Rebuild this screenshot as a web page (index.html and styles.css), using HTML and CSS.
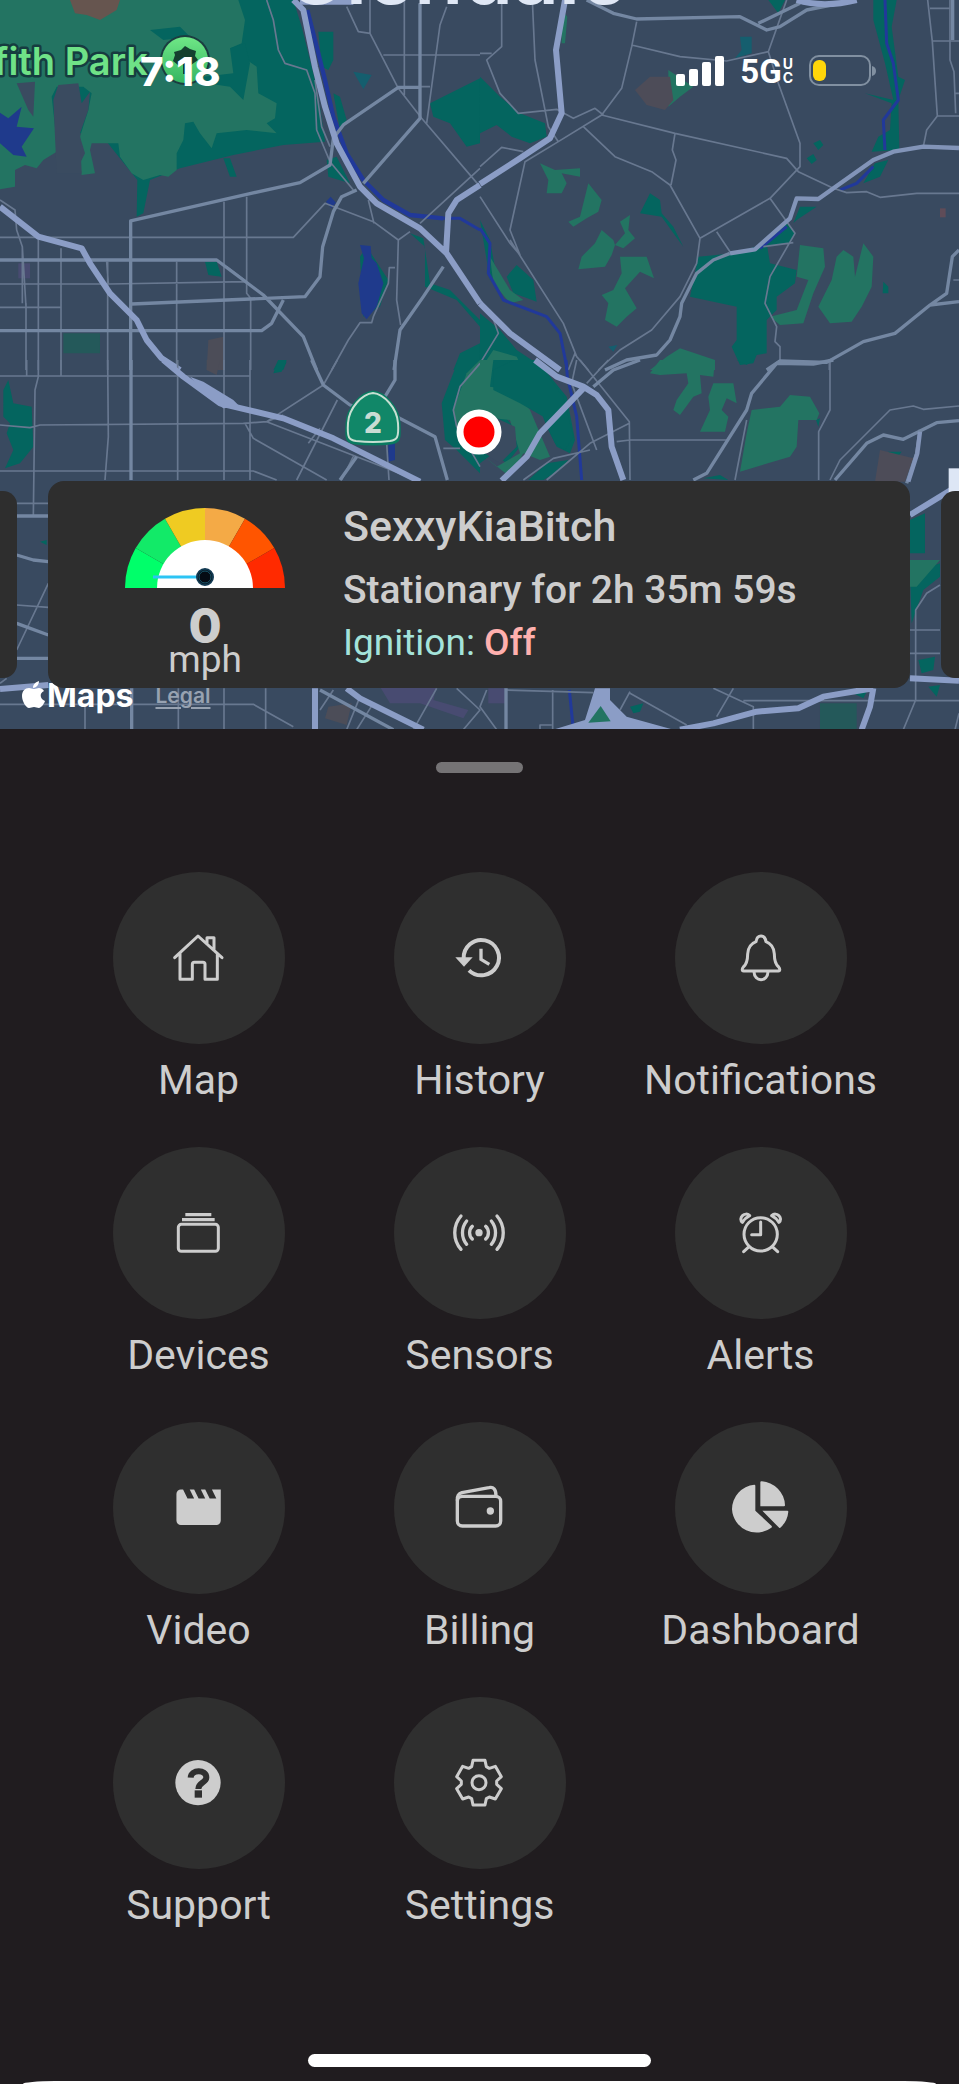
FILE: index.html
```html
<!DOCTYPE html>
<html lang="en">
<head>
<meta charset="utf-8">
<meta name="viewport" content="width=device-width, initial-scale=1">
<title>Vehicle tracker</title>
<link rel="stylesheet" href="styles.css">
</head>
<body>
<main class="app">
  <section class="map" aria-label="Map">
    <svg class="map-canvas" viewBox="0 0 959 729" preserveAspectRatio="xMidYMin slice" aria-hidden="true">
      <defs>
        <linearGradient id="pin" x1="0" y1="0" x2="0" y2="1"><stop offset="0" stop-color="#6fe786"/><stop offset="1" stop-color="#35b562"/></linearGradient>
      </defs>
      <rect width="959" height="729" fill="#394a60"/>

      <!-- north-west -->
      <g transform="scale(.33333)">
        <path class="park" d="M0 0H880L905 80L945 240L960 320L975 425L850 435L700 465L540 505L450 540L430 640L410 650L412 540L380 500L300 400L0 400Z"/>
        <path class="hill" d="M0 0H715L735 60L725 130L690 145L770 200L775 280L830 310L825 355L800 370L830 400L740 390L650 400L635 445L600 400L580 365L555 370L550 420L530 460L530 510L505 530L480 525L430 540L395 520L360 470L355 430H275L270 450L285 520L245 525L240 490L255 460L240 410L265 330L275 280L250 260H170L155 290L165 380L170 455L130 480L110 505L75 495L45 510V560L0 568Z"/>
        <path class="land" d="M50 250L105 245L100 350L85 330ZM175 255L235 250L245 310L270 275L265 330L240 400L245 520L170 520L160 300Z"/>
        <path class="park" d="M450 90L540 80L570 110L490 120ZM690 145L735 130L750 190L730 300L690 260L620 250L610 230L700 220ZM1290 310L1440 235V430L1400 440L1350 370L1300 350ZM955 95H1000V180L985 210L965 200ZM1000 280L1020 290L1040 360L1020 390ZM980 480L1010 470L1050 550L985 530ZM670 475H690L710 530H690ZM615 785H650L665 830L625 825ZM1230 700L1270 715L1290 850L1350 870L1440 960V980L1370 900L1275 860V740ZM1360 1110L1380 1060L1440 1030V1110ZM820 1110L835 1080L860 1085L850 1110ZM1080 770L1100 740L1165 840L1140 920L1090 950Z"/>
        <path fill="#66554f" d="M210 0H360L350 30L300 60L260 45L225 40Z"/>
        <path fill="#24595a" d="M190 1000H300V1060H190Z"/><path fill="#4c4d58" d="M625 1020L670 1010V1110H620Z"/><path fill="#484b71" d="M55 790H90V835H55Z"/>
        <path fill="#155e6e" d="M1060 215L1115 225L1090 268Z"/>
        <path class="lake" d="M0 338L25 355L65 320L50 380L102 385L65 440L80 470L40 465L0 430ZM1080 735L1112 738L1115 775L1130 790L1150 850L1130 920L1100 958L1085 940L1075 850L1092 775ZM978 605L992 590L1008 608L994 625Z"/>
        <path class="river wide" d="M922 30L945 120L975 240L1000 350L1040 460L1090 540L1150 600L1230 645L1330 655"/>
        <path class="river" d="M1330 655L1380 655L1440 690"/>
        <path class="minor" d="M0 712H880L975 610L1120 665L1195 720L1230 695M0 852H330L740 845L680 800M0 922H185M67 910V740L50 690L45 630L0 600M78 910V1110M115 715V1110M183 745V1110M323 785V1110M325 850L320 785M530 785V1110M672 605V1110M740 590V880L752 895V1110M67 740L78 920M1195 720L1190 900L1202 975M1185 803H1168L1165 850L1120 950L1115 968H1080L1045 1020L995 1110M800 0L820 60L835 150L855 190L920 210L945 280L950 390L990 485L1060 570M1105 600L1122 670M1260 670L1440 505M1150 165H1440M1110 0V100L1195 265L1265 355L1440 560M1040 20L1075 95L1110 100M1213 0V285M1340 20L1320 75L1280 370M1255 260H1290M945 240L965 380L990 440"/>
        <path class="road" d="M392 1110V663L740 583L900 548L990 495L1000 415L1030 375L1195 262H1258M1260 10V355L1090 550M1070 570L1025 590L1000 635L968 740L960 830L915 890L395 912M0 780H650L790 885L910 1010L950 1110M0 992H785L815 970L850 900M1330 800L1270 890L1200 990L1182 1110"/>
        <path class="freeway" d="M880 0L910 30L945 200L975 320L1010 430L1080 560L1130 610L1260 685L1340 760L1440 910M1440 555L1370 600L1345 640L1338 760M0 620L115 710L245 745L270 790L330 880L410 960L440 1020L485 1075L540 1110"/>
        <path class="freeway" d="M900 5H1060"/>
      </g>

      <!-- north-east -->
      <g transform="translate(480 0) scale(.33333)">
        <path class="park" d="M0 230L60 290L120 340L195 370L200 410L150 430L95 410L50 375L0 400ZM1180 0H1250L1235 80L1255 230L1275 240L1255 300L1258 450L1175 455L1195 410L1230 390L1235 310L1155 280L1240 300L1215 190L1180 60ZM480 640L510 580L540 600L545 640L580 680L610 740L595 720L545 650ZM655 770L760 760L860 730L870 790L950 810L945 850L890 890V930L860 960V1060L830 1065L820 1090L780 1095L755 1040L770 1020V920L630 890ZM1150 550L1185 490L1225 480L1200 530ZM940 670L960 620L1010 620L950 660ZM840 740L920 670L945 700L930 730ZM1000 430L1020 420L1030 435L1015 450ZM980 475L1000 462L1010 480L995 492ZM80 830L110 795L160 840L170 905L130 890L100 880ZM0 940L60 990L110 1050L200 1110H0ZM0 660L30 720L50 830L30 840ZM865 0H915L895 40ZM1210 845L1225 860V880H1208Z"/>
        <path class="hill" d="M180 490L225 510L300 505L300 530L245 520L260 550L245 580L200 580L205 540ZM325 550L365 600L355 635L320 655L280 680L265 665L300 650ZM365 690L400 720L405 735L435 700L420 665L450 645L445 690L465 715L430 745L405 735L395 765L375 800L295 808L305 770L345 730ZM420 770L500 770L522 835L480 815L435 865L470 925L440 950L410 980L375 960L385 910L365 885L400 870L425 820ZM960 735L1030 745L1035 800L1000 880L970 970L900 975L870 950L950 930L985 840L950 830ZM1070 770L1090 750L1120 770L1125 830L1150 730L1180 770L1175 860L1145 920L1115 965L1050 970L1015 920L1055 840ZM0 1110L40 1050L110 1070L130 1110ZM510 1110L560 1070L600 1045L705 1080V1110ZM565 210L640 260L600 290L565 320ZM245 30L262 50L255 130H245ZM30 770L90 870L130 900L90 910L40 850Z"/>
        <path fill="#4d4c58" d="M465 270L510 230L570 230L580 300L555 330L500 315Z"/><path fill="#5f4c58" d="M1380 625H1397V652H1380Z"/>
        <path fill="#155e6e" d="M780 110H815V160L765 175L785 150ZM385 1040L412 1035L400 1055Z"/>
        <path class="river" d="M0 685L30 730L25 820L70 900L200 950L240 1000L262 1110M1215 0L1220 130L1240 190L1255 300L1210 360L1215 450M1180 500L1130 550L1080 570M920 680L840 745"/>
        <path class="minor" d="M65 0V140L20 180L60 280L115 340L230 328L280 355L345 325L370 345M0 160H35M157 0L165 180L205 380L235 425M470 65L455 140L425 265L365 345L235 425L135 485L90 690L120 765L90 730L0 590M0 500L65 442L130 455M310 380L405 470L515 515L570 555L660 715L650 790L600 890L515 990L420 1050L355 1110M455 135L600 170L740 183L865 155L920 0M865 155L895 250L960 430V500L870 595L660 715M365 345L585 400L920 475L955 515L1060 565L1100 578L1160 575L1200 592L1310 580H1437M585 400L577 450L588 480L573 555M870 595L945 700L870 830L855 910L890 980L885 1025L900 1040V1080M710 695L750 755M850 740L940 728M90 720L250 970L290 1070L325 1110M1343 0L1357 125L1372 348L1340 390L1330 440M1350 25H1410M1357 123H1437M1372 348H1437M1410 0V180L1422 215L1427 340M30 930L55 1000L0 1090M285 1060L265 1110M1048 1085V1110M1420 840H1437M1427 280H1437"/>
        <path class="road" d="M320 0L400 40L470 57L780 50L860 90L900 80L980 30L1080 10M835 70L960 10M860 1110L900 1083L1040 1087L1150 1025L1245 1000L1350 915L1437 905M1350 915L1400 880L1417 770L1437 750M1418 0V120M375 1110L440 1080L530 1065L570 1020L600 950L605 910L650 820L700 780L750 760"/>
        <path class="trunk" d="M750 760L825 748L930 655L950 595L1015 597L1180 480L1240 455L1330 440L1437 444"/>
        <path class="freeway" d="M255 0L228 150L245 340L210 415L120 475L0 552M0 910L90 1000L240 1110M950 0Q1030 25 1130 0"/>
      </g>

      <!-- south-west -->
      <g transform="translate(0 360) scale(.33333)">
        <path class="park" d="M10 90L25 60L40 130L95 140L100 260L60 310L15 325L40 270L20 220L30 190L10 170ZM820 40L835 0H860L845 35ZM1375 0H1440V340L1370 270L1335 240L1325 130ZM120 545L140 540V555Z"/>
        <path class="hill" d="M1400 40L1440 0V280L1375 230L1360 150Z"/>
        <path fill="#4c4d58" d="M620 0H660L650 45L620 30ZM985 1040L1055 1030L1040 1095L975 1075Z"/>
        <path fill="#484b71" d="M1140 980H1310L1300 1020L1405 1050L1390 1075L1260 1030L1170 1030Z"/>
        <path class="lake" d="M1165 240H1185V300L1165 305Z"/>
        <path class="minor" d="M80 0V50M0 48H750M183 0V48M115 0V50L105 90L100 465M323 0L325 230L315 360M533 0V360M672 0V360M750 0V360M0 195L90 203L120 195L730 190L800 185L970 75L1012 0M735 190L760 235L980 360M0 333H760L830 360M850 165L800 185L1250 360M960 205L925 250M1012 120L890 360M1062 285L1025 360M1160 250L1167 360M1330 265H1380M1440 10L1380 80L1360 150L1370 200L1440 320M50 430H145M50 735L145 742M50 870L145 670M255 1030V1109M0 1033H760L880 1100M535 985V1109M672 985V1109M797 985V1109M1000 990L960 1050M1080 1010L1040 1109M1120 1030L1070 1109M1310 985L1240 1109M1370 985L1440 1050L1390 1109M0 970L20 955"/>
        <path class="road" d="M393 0V360M395 985V1109M935 0L970 75L1050 135L1190 170L1305 230L1342 360M1185 0V60L1155 110M1070 290L1020 360M50 468H145M50 585L100 600L145 605M50 790L145 825M50 895H145M960 990L1180 1109"/>
        <path class="freeway" d="M490 0L550 50L660 130L850 175L1000 235L1260 365M0 987L145 975M945 985V1109M1040 985L1080 1015L1270 1109"/>
        <path fill="#8b9dc6" d="M570 50L610 65L700 120L720 140L670 145L620 110Z"/>
      </g>

      <!-- south-east -->
      <g transform="translate(480 360) scale(.33333)">
        <path class="park" d="M0 0H170L260 110L285 240L270 280L230 260L200 200L170 120L90 60L40 130L100 200L120 260L80 310L40 280L0 310ZM145 360L200 310L265 300L240 330L190 360ZM670 355L720 345L745 360ZM770 0H820L800 15ZM1225 275L1265 275L1245 300ZM1290 480L1335 460V580H1290ZM1290 640L1380 610V650L1330 690L1295 790ZM1315 900L1365 890L1360 930L1325 940ZM1345 980L1380 975L1370 1010ZM1120 1000L1160 995L1150 1015ZM450 1040L490 1030L480 1055L460 1060ZM1008 180L1020 175L1015 200Z"/>
        <path class="hill" d="M510 40L540 0H705L700 50L660 45L665 100L640 110L600 165L580 150L590 120L625 70L620 40L540 45ZM700 70L760 70L770 130L740 115L725 150L745 170L735 215L660 215L690 150L685 110ZM815 150L900 140L930 105L990 110L1018 160L1010 180L955 180L950 260L930 290L780 335L800 220ZM0 0H40L30 80L100 90L150 150L210 290L180 300L130 280L90 350L0 280L50 320L120 280L90 180L0 170ZM1290 600H1380L1310 680H1290Z"/>
        <path class="park" d="M40 30L100 0H165L250 110L280 230L255 270L225 250L190 170L120 130L40 90Z"/>
        <path class="land" d="M0 190L50 175L105 200L110 260L60 310L0 270Z"/>
        <path fill="#4d4c58" d="M1200 270L1300 295L1275 365H1185Z"/><path fill="#24595a" d="M1020 1030H1130V1109H1020Z"/><path fill="#484b71" d="M25 985H75V1030H25Z"/>
        <path class="river" d="M258 0L262 50L290 170L305 360M268 990L280 1109"/>
        <path class="minor" d="M290 0L275 70L350 270M300 0L340 50L448 185L450 360M448 190L330 250L200 360M130 360L220 295L330 270M410 245L450 240H745M385 0L320 70M800 180L765 360M1050 0V150L1016 215V360M1050 360L1080 300L1230 150L1300 138L1330 148L1437 138M75 990L340 998M450 995L420 1050M450 1000L620 1095M700 985L820 1040V1109M760 985L710 1070M790 1022H1437M1307 960V750L1340 700L1380 675M1290 810H1380M1290 880H1380M1307 960V1020L1270 1109M218 990V1109M180 1109V1095H215M20 990L0 1040L50 1109M1425 1109L1437 1060"/>
        <path class="road" d="M480 0L400 30L340 80M640 360L680 340L800 150L815 100L890 10L1000 12L1060 0M1065 360L1160 250L1210 225L1270 238L1370 188L1437 182M1320 210L1310 280L1280 370M78 985V1109"/>
        <path class="trunk" d="M1320 215L1312 280L1285 365"/>
        <path class="freeway" d="M165 0L230 50L310 80L350 105L385 150L395 260L430 360M310 85L180 220L140 290L65 362M1290 465L1437 375M1290 955L1437 962M600 1109L700 1090L830 1055L955 1045L1030 1010L1180 985M1180 985L1170 1040L1145 1109"/>
        <path fill="#8b9dc6" d="M345 985H390V1020L440 1070L580 1109H220L315 1080Z"/>
        <path class="hill" d="M362 1038L325 1088L392 1084Z"/>
        <path class="tag" d="M1406 325H1437V400H1406Z"/>
      </g>

      <text class="city" x="286" y="4">Glendale</text>
      <circle cx="185" cy="60" r="25" fill="#1b3d40"/>
      <circle cx="185" cy="60" r="23" fill="url(#pin)"/>
      <path d="M185 46L190 49L196 51L195 56L198 60L191 65L187 64V74H183V64L178 65L173 61L175 55L174 52L181 50Z" fill="#14402f"/>
      <text class="place" x="148" y="75" text-anchor="end">Griffith Park</text>
      <path d="M373 392C384 393 398 407 399 423C400 440 399 442 391 443Q373 445 355 443C347 442 346 440 347 423C348 407 362 393 373 392Z" fill="#0e8464" stroke="#0a7a60" stroke-width="3"/>
      <path d="M373 393C384 394 397 408 398 423C399 438 397 440 390 441Q373 443 356 441C349 440 347 438 348 423C349 408 362 394 373 393Z" fill="#118768" stroke="#c7dfd2" stroke-width="2"/>
      <text class="route" x="373" y="433" text-anchor="middle">2</text>
      <circle cx="479" cy="432" r="19" fill="#f00" stroke="#fff" stroke-width="7"/>
    </svg>

    <div class="attribution">
      <svg class="apple" viewBox="0 0 24 28" aria-hidden="true"><path fill="#fff" d="M17 0C17 4 14 7 11 7C11 3 14 1 17 0ZM12 8C14 8 15 7 17 7C19 7 21 8 22 10C17 12 18 18 23 20C22 23 19 27 17 27C15 27 14 26 12 26C10 26 9 27 7 27C4 27 0 20 0 15C0 10 3 7 7 7C9 7 10 8 12 8Z"/></svg>
      <span class="maps-word">Maps</span>
      <a class="legal" href="#legal">Legal</a>
    </div>

    <header class="status">
      <time class="clock">7:18</time>
      <div class="signals">
        <svg class="bars" viewBox="0 0 48 30" aria-label="Signal strength"><g fill="#fff"><rect y="18" width="9" height="12" rx="2"/><rect x="13" y="13" width="9" height="17" rx="2"/><rect x="26" y="6" width="9" height="24" rx="2"/><rect x="39" width="9" height="30" rx="2"/></g></svg>
        <span class="network">5G<span class="uc"><span>U</span><span>C</span></span></span>
        <svg class="battery" viewBox="0 0 68 32" aria-label="Battery low"><rect x="1" y="1" width="60" height="29" rx="9" fill="none" stroke="#8190a1" stroke-width="2"/><path d="M63 11Q67 12 67 16T63 21Z" fill="#8190a1"/><rect x="4" y="5" width="13" height="21" rx="6" fill="#ffd60a"/></svg>
      </div>
    </header>

    <div class="carousel">
      <div class="peek peek-left"></div>
      <article class="vehicle">
        <div class="speed">
          <svg class="gauge" viewBox="0 0 160 80" aria-hidden="true">
            <path fill="#00ff6a" d="M0 80A80 80 0 0 1 10.7 40L80 80Z"/>
            <path fill="#12ea68" d="M10.7 40A80 80 0 0 1 40 10.7L80 80Z"/>
            <path fill="#efcb22" d="M40 10.7A80 80 0 0 1 80 0V80Z"/>
            <path fill="#f4aa46" d="M80 0A80 80 0 0 1 120 10.7L80 80Z"/>
            <path fill="#ff5500" d="M120 10.7A80 80 0 0 1 149.3 40L80 80Z"/>
            <path fill="#ff2a00" d="M149.3 40A80 80 0 0 1 160 80H80Z"/>
            <path fill="#fff" d="M32 80A48 48 0 0 1 128 80Z"/>
            <path d="M28 69H72" stroke="#2cc4f4" stroke-width="3"/>
            <circle cx="80" cy="69" r="8" fill="#050b14" stroke="#123a52" stroke-width="2"/><circle cx="80" cy="69" r="6" fill="none" stroke="#18586e"/>
          </svg>
          <strong class="speed-value">0</strong>
          <span class="speed-unit">mph</span>
        </div>
        <div class="details">
          <h1 class="name">SexxyKiaBitch</h1>
          <p class="state">Stationary for 2h 35m 59s</p>
          <p class="ignition">Ignition: <span class="off">Off</span></p>
        </div>
      </article>
      <div class="peek peek-right"></div>
    </div>
  </section>

  <section class="sheet">
    <button class="handle" type="button" aria-label="Resize menu"></button>
    <nav class="menu" aria-label="Main menu">
      <a class="tile" href="#map"><span class="disc"><svg class="icon" viewBox="0 0 180 180"><g class="line"><path d="M17 89L87 24L159 89M114 48V29H135V67M33 76V154H70V109Q70 103 76 103H102Q108 103 108 109V154H145V76"/></g></svg></span><span class="label">Map</span></a>
      <a class="tile" href="#history"><span class="disc"><svg class="icon" viewBox="0 0 180 180"><path class="solid" d="M16 88H68L42 116Z"/><path d="M41 92A53 53 0 1 1 57 127" fill="none" stroke="#cdcdcd" stroke-width="12"/><path d="M93 62V94L118 109" fill="none" stroke="#cdcdcd" stroke-width="10"/></svg></span><span class="label">History</span></a>
      <a class="tile" href="#notifications"><span class="disc"><svg class="icon" viewBox="0 0 180 180"><g class="line"><path d="M38 129C32 129 33 121 37 117C49 107 50 94 50 78C51 58 62 46 75 41C77 28 84 24 90 24C96 24 103 28 105 41C118 46 129 58 130 78C130 94 131 107 143 117C147 121 148 129 142 129Z"/><path d="M69 131C70 163 110 163 111 131"/></g></svg></span><span class="label">Notifications</span></a>
      <a class="tile" href="#devices"><span class="disc"><svg class="icon" viewBox="0 0 180 180"><rect x="28" y="64" width="120" height="81" rx="9" fill="none" stroke="#cdcdcd" stroke-width="9"/><path d="M39 50H137M49 35H127" stroke="#cdcdcd" stroke-width="10"/></svg></span><span class="label">Devices</span></a>
      <a class="tile" href="#sensors"><span class="disc"><svg class="icon" viewBox="0 0 180 180"><circle class="solid" cx="87" cy="89" r="11"/><g class="line heavy"><path d="M67 70A26 26 0 0 0 67 108M50 54A55 55 0 0 0 50 124M33 39A76 76 0 0 0 33 139M107 70A26 26 0 0 1 107 108M124 54A55 55 0 0 1 124 124M141 39A76 76 0 0 1 141 139"/></g></svg></span><span class="label">Sensors</span></a>
      <a class="tile" href="#alerts"><span class="disc"><svg class="icon" viewBox="0 0 180 180"><g class="line"><circle cx="89" cy="94" r="50"/><path d="M89 57V95H62M51 134L38 146M127 134L140 146"/><path d="M34 58C20 45 42 24 56 38C46 43 39 50 34 58ZM144 58C158 45 136 24 122 38C132 43 139 50 144 58Z"/></g></svg></span><span class="label">Alerts</span></a>
      <a class="tile" href="#video"><span class="disc"><svg class="icon" viewBox="0 0 180 180"><path class="solid" transform="translate(9 8) scale(6.65)" d="M18 4L20 8H17L15 4H13L15 8H12L10 4H8L10 8H7L5 4H4A2 2 0 0 0 2 6V18A2 2 0 0 0 4 20H20A2 2 0 0 0 22 18V4Z"/></svg></span><span class="label">Video</span></a>
      <a class="tile" href="#billing"><span class="disc"><svg class="icon" viewBox="0 0 180 180"><g class="line heavy"><rect x="22" y="55" width="130" height="89" rx="15"/><path d="M22 66C21 53 24 48 36 44L117 29C130 26 138 33 138 53"/></g><circle class="solid" cx="121" cy="99" r="11"/></svg></span><span class="label">Billing</span></a>
      <a class="tile" href="#dashboard"><span class="disc"><svg class="icon" viewBox="0 0 180 180"><path class="solid" d="M70 20Q73 20 73 23V98L122 144Q124 147 121 149A74 74 0 0 1 3 94A74 74 0 0 1 70 20ZM88 13Q88 10 91 10A74 74 0 0 1 162 82Q162 85 159 85H88ZM94 98H169Q172 98 172 101A74 74 0 0 1 148 149Q145 151 143 148Z"/></svg></span><span class="label">Dashboard</span></a>
      <a class="tile" href="#support"><span class="disc"><svg class="icon" viewBox="0 0 180 180"><circle class="solid" cx="87" cy="89" r="68"/><path d="M65 74C66 49 112 48 112 73C112 90 88 87 88 108" fill="none" stroke="#2f2f2f" stroke-width="18"/><path d="M77 112H99V134H77Z" fill="#2f2f2f"/></svg></span><span class="label">Support</span></a>
      <a class="tile" href="#settings"><span class="disc"><svg class="icon" viewBox="0 0 180 180"><g class="line" transform="translate(87 89)"><path d="M-18 -67H18L22 -48L31 -43L49 -49L67 -18L53 -5V5L67 18L49 49L31 43L22 48L18 67H-18L-22 48L-31 43L-49 49L-67 18L-53 5V-5L-67 -18L-49 -49L-31 -43L-22 -48Z"/><circle r="21"/></g></svg></span><span class="label">Settings</span></a>
    </nav>
    <footer class="system">
      <div class="home-indicator"></div>
      <div class="next-screen"></div>
    </footer>
  </section>
</main>
</body>
</html>
```
FILE: styles.css
```css
* { box-sizing: border-box; }

body {
  margin: 0;
  background: #201c1f;
  color: #cdcdcd;
  font-family: Roboto, sans-serif;
}

.app {
  display: flex;
  flex-direction: column;
  min-height: 100vh;
}

/* Map */
.map {
  position: relative;
  display: flex;
  flex-direction: column;
  justify-content: space-between;
  min-height: 729px;
  padding: 51px 0 41px;
  overflow: hidden;
}

.map-canvas {
  position: absolute;
  inset: 0;
  width: 100%;
  height: 100%;
}

.park { fill: #04655f; }
.hill { fill: #237462; }
.land { fill: #3a4b60; }
.lake { fill: #1f3a8c; }
.tag { fill: #dde6f5; }
.river, .minor, .road, .trunk, .freeway { fill: none; stroke-linejoin: round; }
.river { stroke: #21399a; stroke-width: 9; }
.river.wide { stroke-width: 13; }
.minor { stroke: #687890; stroke-width: 5; }
.road { stroke: #7487a2; stroke-width: 10; }
.trunk { stroke: #8294b8; stroke-width: 13; }
.freeway { stroke: #8b9dc6; stroke-width: 18; }

.city, .place, .route { font-family: Inter, sans-serif; }
.city { font-size: 80px; font-weight: 600; fill: #dfe7f5; }
.place {
  font-size: 38px;
  font-weight: 600;
  fill: #6fe287;
  stroke: #163c40;
  stroke-width: 5px;
  stroke-linejoin: round;
  paint-order: stroke;
}
.route { font-size: 28px; font-weight: 800; fill: #c9dcd4; }

.status {
  position: relative;
  display: flex;
  align-items: center;
  justify-content: space-between;
  height: 40px;
  padding: 0 82px 0 140px;
  color: #fff;
  font-family: Inter, sans-serif;
}

.clock { font-size: 40px; font-weight: 800; }
.signals { display: flex; align-items: center; gap: 16px; }
.bars { width: 48px; height: 30px; }
.battery { width: 68px; height: 32px; }

.network {
  display: flex;
  align-items: center;
  gap: 1px;
  font-family: Roboto, sans-serif;
  font-size: 33px;
  font-weight: 700;
}

.uc {
  display: flex;
  flex-direction: column;
  font-family: Inter, sans-serif;
  font-size: 14px;
  line-height: 14px;
}

.attribution {
  position: absolute;
  left: 22px;
  bottom: 12px;
  display: flex;
  align-items: center;
  height: 44px;
  color: #fff;
  font-family: Inter, sans-serif;
}

.apple { width: 24px; height: 28px; }
.maps-word { margin-left: 1px; font-size: 32px; font-weight: 700; }
.legal { margin-left: 22px; color: #97a2b1; font-size: 21px; font-weight: 600; text-underline-offset: 4px; }

.carousel {
  position: relative;
  display: grid;
  grid-template-columns: 17px 1fr 18px;
  column-gap: 31px;
  align-items: center;
}

.peek { height: 187px; background: #2e2e2e; }
.peek-left { border-radius: 0 14px 14px 0; }
.peek-right { border-radius: 14px 0 0 14px; }

.vehicle {
  display: flex;
  gap: 58px;
  min-height: 207px;
  padding: 27px 24px 8px 77px;
  border-radius: 16px;
  background: #2e2e2e;
}

.speed {
  display: flex;
  flex-direction: column;
  align-items: center;
  width: 160px;
}

.gauge { width: 160px; height: 80px; }
.speed-value { margin-top: 16px; font-family: Inter, sans-serif; font-size: 48px; font-weight: 800; line-height: 44px; }
.speed-unit { font-size: 37px; line-height: 24px; }

.details { flex: 1; min-width: 0; }
.name, .state, .ignition { margin: 0; white-space: nowrap; }
.name { font-size: 43px; font-weight: 500; line-height: 36px; }
.state { margin-top: 20px; font-size: 39px; font-weight: 500; line-height: 52px; }
.ignition { color: #a4e3da; font-size: 37px; line-height: 54px; }
.off { color: #ffb0ae; font-weight: 500; }

/* Menu sheet */
.sheet {
  flex: 1;
  display: flex;
  flex-direction: column;
  align-items: center;
  padding-top: 33px;
}

.handle {
  width: 87px;
  height: 11px;
  padding: 0;
  border: 0;
  border-radius: 6px;
  background: #757375;
}

.menu {
  display: grid;
  grid-template-columns: repeat(3, 1fr);
  row-gap: 39px;
  width: 100%;
  margin-top: 99px;
  padding: 0 58px;
}

.tile {
  display: flex;
  flex-direction: column;
  align-items: center;
  gap: 8px;
  color: inherit;
  text-decoration: none;
}

.disc {
  display: grid;
  place-items: center;
  width: 172px;
  height: 172px;
  border-radius: 50%;
  background: #2f2f2f;
}

.icon { width: 60px; height: 60px; }
.solid { fill: #cdcdcd; }
.line { fill: none; stroke: #cdcdcd; stroke-width: 9; stroke-linecap: round; stroke-linejoin: round; }
.heavy { stroke-width: 10; }
.label { font-size: 41px; line-height: 56px; }

.system {
  display: flex;
  flex-direction: column;
  align-items: center;
  gap: 14px;
  width: 100%;
  margin-top: auto;
  padding: 0 23px;
}

.home-indicator { width: 343px; height: 13px; border-radius: 7px; background: #fff; }
.next-screen { width: 100%; height: 3px; border-radius: 32px 32px 0 0 / 3px 3px 0 0; background: #fff; }
```
